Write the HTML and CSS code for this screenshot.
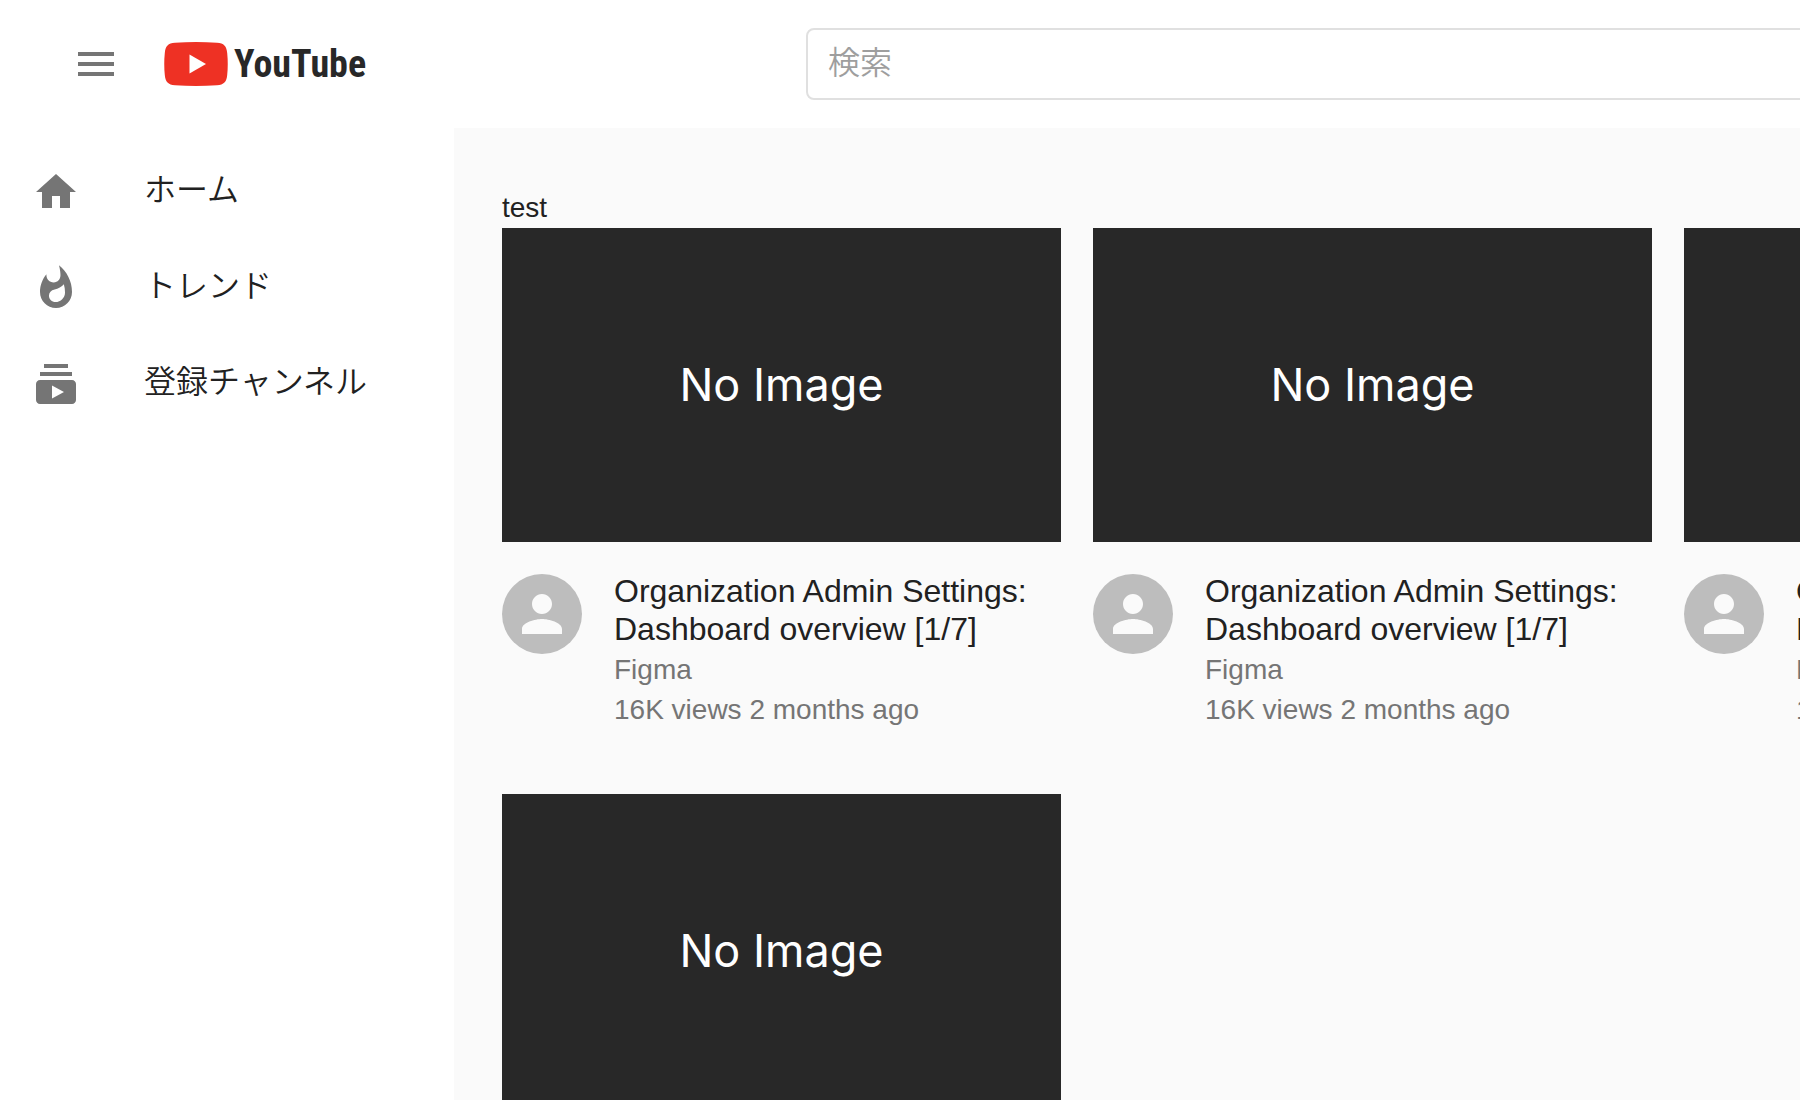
FILE: index.html
```html
<!DOCTYPE html>
<html lang="ja">
<head>
<meta charset="utf-8">
<title>YouTube</title>
<link rel="stylesheet" href="styles.css">
</head>
<body>
<div class="app">
  <header class="header">
    <button class="menu-button" type="button" aria-label="メニュー">
      <svg class="icon" viewBox="0 0 24 24"><path d="M3 18h18v-2H3v2zm0-5h18v-2H3v2zm0-7v2h18V6H3z"/></svg>
    </button>
    <a class="logo" href="#">
      <svg class="logo-mark" viewBox="0 0 64 44">
        <path fill="#ee3124" d="M11 .8Q32-.7 53 .8C60 1.300 62.500 4 63.200 11Q64.300 22 63.200 33C62.500 40 60 42.700 53 43.200Q32 44.700 11 43.200C4 42.700 1.500 40 .8 33Q-.3 22 .8 11C1.500 4 4 1.300 11 .8z"/>
        <path fill="#fff" d="M25.500 12.500v19L42 22z"/>
      </svg>
      <span class="logo-text">YouTube</span>
    </a>
    <form class="search">
      <input class="search-input" type="text" placeholder="検索" aria-label="検索">
    </form>
  </header>
  <div class="body">
    <nav class="sidebar">
      <a class="nav-item" href="#">
        <svg class="icon" viewBox="0 0 24 24"><path d="M10 20v-6h4v6h5v-8h3L12 3 2 12h3v8z"/></svg>
        <span class="nav-label">ホーム</span>
      </a>
      <a class="nav-item" href="#">
        <svg class="icon" viewBox="0 0 24 24"><path d="M13.500.67s.74 2.650.74 4.800c0 2.060-1.350 3.730-3.410 3.730-2.070 0-3.630-1.670-3.630-3.730l.03-.36C5.210 7.510 4 10.620 4 14c0 4.420 3.580 8 8 8s8-3.580 8-8C20 8.610 17.410 3.800 13.500.67zM11.710 19c-1.780 0-3.220-1.400-3.220-3.140 0-1.620 1.050-2.760 2.810-3.120 1.770-.36 3.600-1.210 4.620-2.580.39 1.290.59 2.650.59 4.040 0 2.650-2.150 4.800-4.800 4.800z"/></svg>
        <span class="nav-label">トレンド</span>
      </a>
      <a class="nav-item" href="#">
        <svg class="icon" viewBox="0 0 24 24"><path d="M20 8H4V6h16v2zm-2-6H6v2h12V2zm4 10v8c0 1.100-.9 2-2 2H4c-1.100 0-2-.9-2-2v-8c0-1.100.9-2 2-2h16c1.100 0 2 .9 2 2zm-6 4l-6-3.270v6.530L16 16z"/></svg>
        <span class="nav-label">登録チャンネル</span>
      </a>
    </nav>
    <main class="main">
      <p class="section-label">test</p>
      <div class="grid">
        <article class="card">
          <div class="thumb">No Image</div>
          <div class="details">
            <div class="avatar"><svg class="avatar-icon" viewBox="0 0 24 24"><path d="M12 12c2.210 0 4-1.790 4-4s-1.790-4-4-4-4 1.790-4 4 1.790 4 4 4zm0 2c-2.670 0-8 1.340-8 4v2h16v-2c0-2.660-5.330-4-8-4z"/></svg></div>
            <div class="text">
              <h2 class="title">Organization Admin Settings: Dashboard overview [1/7]</h2>
              <p class="meta">Figma</p>
              <p class="meta">16K views 2 months ago</p>
            </div>
          </div>
        </article>
        <article class="card">
          <div class="thumb">No Image</div>
          <div class="details">
            <div class="avatar"><svg class="avatar-icon" viewBox="0 0 24 24"><path d="M12 12c2.210 0 4-1.790 4-4s-1.790-4-4-4-4 1.790-4 4 1.790 4 4 4zm0 2c-2.670 0-8 1.340-8 4v2h16v-2c0-2.660-5.330-4-8-4z"/></svg></div>
            <div class="text">
              <h2 class="title">Organization Admin Settings: Dashboard overview [1/7]</h2>
              <p class="meta">Figma</p>
              <p class="meta">16K views 2 months ago</p>
            </div>
          </div>
        </article>
        <article class="card">
          <div class="thumb">No Image</div>
          <div class="details">
            <div class="avatar"><svg class="avatar-icon" viewBox="0 0 24 24"><path d="M12 12c2.210 0 4-1.790 4-4s-1.790-4-4-4-4 1.790-4 4 1.790 4 4 4zm0 2c-2.670 0-8 1.340-8 4v2h16v-2c0-2.660-5.330-4-8-4z"/></svg></div>
            <div class="text">
              <h2 class="title">Organization Admin Settings: Dashboard overview [1/7]</h2>
              <p class="meta">Figma</p>
              <p class="meta">16K views 2 months ago</p>
            </div>
          </div>
        </article>
        <article class="card">
          <div class="thumb">No Image</div>
        </article>
      </div>
    </main>
  </div>
</div>
</body>
</html>
```
FILE: styles.css
```css
* {
  box-sizing: border-box;
}

body,
h2,
p {
  margin: 0;
}

body {
  background: #fff;
  color: #212121;
  font-family: "Liberation Sans", "Noto Sans CJK JP", sans-serif;
  font-size: 28px;
  line-height: 40px;
}

.app {
  display: flex;
  flex-direction: column;
  height: 100vh;
  overflow: hidden;
}

.header {
  display: flex;
  flex: none;
  align-items: center;
  height: 128px;
  padding-left: 72px;
}

.menu-button {
  display: flex;
  margin: 0 44px 0 0;
  padding: 0;
  border: 0;
  background: none;
}

.icon {
  flex: none;
  width: 48px;
  height: 48px;
  fill: #757575;
}

.logo {
  display: flex;
  flex: none;
  align-items: center;
  gap: 6px;
  width: 642px;
  color: #282828;
  text-decoration: none;
}

.logo-mark {
  width: 64px;
  height: 44px;
}

.logo-text {
  font-family: "Roboto Condensed", "Liberation Sans Narrow", sans-serif;
  font-size: 38px;
  font-weight: 700;
  line-height: 44px;
}

.search {
  display: flex;
  flex: none;
  width: 1200px;
}

.search-input {
  flex: 1;
  height: 72px;
  padding: 0 20px 2px;
  border: 2px solid #e0e0e0;
  border-radius: 8px;
  background: #fff;
  color: #212121;
  font: inherit;
  font-size: 32px;
  font-weight: 350;
}

.search-input::placeholder {
  color: #9e9e9e;
}

.body {
  display: flex;
  flex: 1;
  min-height: 0;
}

.sidebar {
  flex: none;
  width: 454px;
  padding-top: 16px;
}

.nav-item {
  display: flex;
  align-items: center;
  gap: 64px;
  height: 96px;
  padding-left: 32px;
  color: #212121;
  font-size: 32px;
  font-weight: 350;
  text-decoration: none;
}

.nav-label {
  padding-bottom: 4px;
}

.main {
  flex: 1;
  min-width: 0;
  overflow: hidden;
  padding: 60px 0 0 48px;
  background: #fafafa;
}

.grid {
  display: grid;
  grid-template-columns: repeat(3, 559px);
  gap: 64px 32px;
}

.thumb {
  display: flex;
  align-items: center;
  justify-content: center;
  height: 314px;
  background: #282828;
  color: #fff;
  font-family: Inter, sans-serif;
  font-size: 45px;
}

.details {
  display: flex;
  gap: 32px;
  padding-top: 30px;
}

.avatar {
  display: flex;
  flex: none;
  align-items: center;
  justify-content: center;
  width: 80px;
  height: 80px;
  margin-top: 2px;
  border-radius: 50%;
  background: #bdbdbd;
}

.avatar-icon {
  width: 60px;
  height: 60px;
  fill: #fafafa;
}

.title {
  margin-bottom: 2px;
  font-size: 32px;
  font-weight: 400;
  line-height: 38px;
}

.meta {
  color: #757575;
}
```
